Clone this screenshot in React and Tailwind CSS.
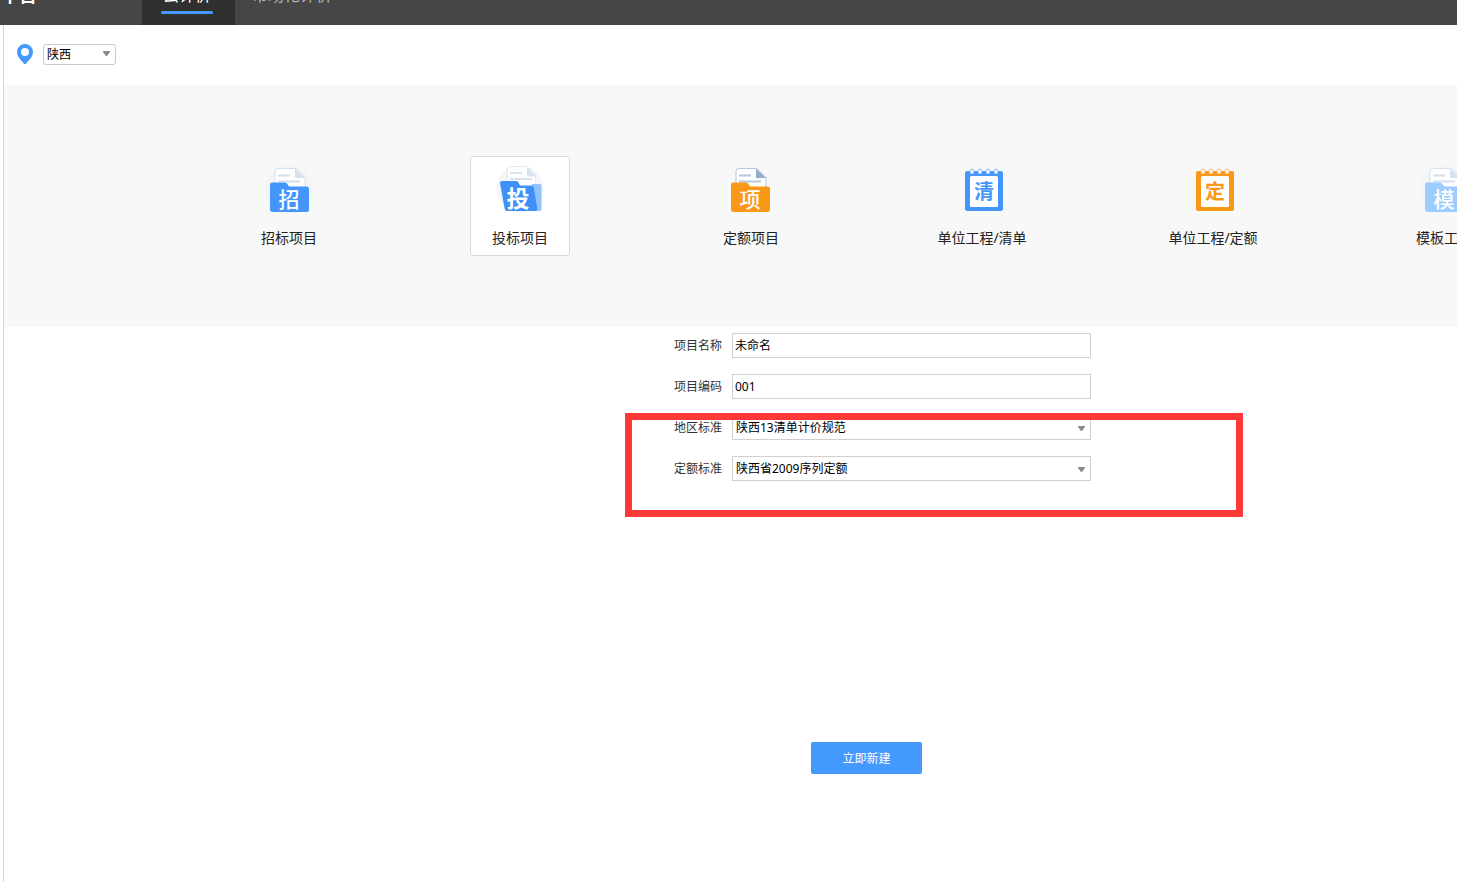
import { useState } from 'react'

const FONT = "font-['Noto_Sans','Noto_Sans_CJK_SC',sans-serif]"

function FolderIcon({ char, folder, line, fold, halo }) {
  return (
    <svg
      width="52"
      height="52"
      viewBox={halo ? '-1 -1 52 52' : '0 -1 52 52'}
      aria-hidden="true"
    >
      {halo && <circle cx="25" cy="25" r="24" fill="#f3f4f6" />}
      <path
        d="M13.5 3.5h18.500l9 9V30h-30V6a2.500 2.500 0 0 1 2.500-2.500z"
        fill="#fff"
        stroke={line}
      />
      <path d="M31 3.500l10 9.500H31z" fill={fold} />
      <path d="M14 10.500h12M14 16.500h22" stroke={line} strokeWidth="2" />
      <path
        d="M8.500 17.500h12.500q1.500 0 2.500 1.500l1.500 2.500h17.500a2.500 2.500 0 0 1 2.500 2.500v20.500a2.500 2.500 0 0 1-2.500 2.500h-34a2.500 2.500 0 0 1-2.500-2.500v-24.500a2.500 2.500 0 0 1 2.500-2.500z"
        fill={folder}
      />
      <text x="25" y="42" textAnchor="middle" fontSize="21" fontWeight="500" fill="#fff">
        {char}
      </text>
    </svg>
  )
}

function OpenFolderIcon({ char }) {
  return (
    <svg width="52" height="52" viewBox="0 0 52 52" aria-hidden="true">
      <circle cx="26" cy="25" r="23.500" fill="#f4f5f7" />
      <path d="M14.500 2.500h19l8 9V40h-28V3.500z" fill="#fff" stroke="#e1ebf7" />
      <path d="M33 2.500l9 10h-9z" fill="#d6e3f3" />
      <path d="M16 9h12M16 15h22" stroke="#d6e3f3" strokeWidth="2" />
      <path d="M38 20h7.500a2 2 0 0 1 2 2v23a2 2 0 0 1-2 2H34z" fill="#8fc4ff" />
      <path
        d="M8 17h14q1.500 0 2.500 1.500l1.500 3h11.500q2 0 2.300 2l3.500 21.500q0.200 2-1.800 2H13q-2 0-2.300-2L6 19q-0.200-2 2-2z"
        fill="#4091f7"
      />
      <text x="24" y="43" textAnchor="middle" fontSize="23" fontWeight="700" fill="#fff">
        {char}
      </text>
    </svg>
  )
}

function NotepadIcon({ char, color, ring }) {
  return (
    <svg width="52" height="52" viewBox="-2 -1 52 52" aria-hidden="true">
      <rect x="7" y="6" width="38" height="40" rx="2" fill={color} />
      <rect x="12" y="11" width="28" height="31" rx="1.500" fill="#fff" />
      {[14, 22, 30, 38].map((x) => (
        <ellipse key={x} cx={x} cy="6.500" rx="2" ry="2.500" fill="#f8f8f8" stroke={ring} />
      ))}
      <text x="26" y="34" textAnchor="middle" fontSize="20" fontWeight="700" fill={color}>
        {char}
      </text>
    </svg>
  )
}

const projectTypes = [
  {
    id: 'tender',
    label: '招标项目',
    icon: <FolderIcon char="招" folder="#4496fb" line="#d3e0ef" fold="#d3e0ef" halo />,
  },
  { id: 'bid', label: '投标项目', icon: <OpenFolderIcon char="投" /> },
  {
    id: 'quota',
    label: '定额项目',
    icon: <FolderIcon char="项" folder="#fb9817" line="#b5c8dc" fold="#93adc9" />,
  },
  {
    id: 'unitList',
    label: '单位工程/清单',
    icon: <NotepadIcon char="清" color="#4496fb" ring="#8bbffb" />,
  },
  {
    id: 'unitQuota',
    label: '单位工程/定额',
    icon: <NotepadIcon char="定" color="#fb9817" ring="#fcc077" />,
  },
  {
    id: 'template',
    label: '模板工程',
    icon: <FolderIcon char="模" folder="#9dccff" line="#d3e0ef" fold="#d3e0ef" halo />,
  },
]

function Arrow({ className }) {
  return (
    <svg
      className={`pointer-events-none absolute right-[6px] ${className}`}
      width="7"
      height="5"
      viewBox="0 0 7 5"
      aria-hidden="true"
    >
      <path d="M0 0h7v1L4 5H3L0 1z" fill="#8c8c8c" />
    </svg>
  )
}

function Row({ id, label, children }) {
  return (
    <div className="flex items-center">
      <label htmlFor={id} className="w-[58px] text-xs text-[#333]">
        {label}
      </label>
      {children}
    </div>
  )
}

function SelectField({ id, options }) {
  return (
    <div className="relative w-[359px]">
      <select
        id={id}
        className="block h-[25px] w-full appearance-none border border-[#cfcfcf] bg-white px-[3px] text-xs text-black outline-none"
      >
        {options.map((option) => (
          <option key={option}>{option}</option>
        ))}
      </select>
      <Arrow className="top-[11px]" />
    </div>
  )
}

function App() {
  const [activeType, setActiveType] = useState('bid')
  const [name, setName] = useState('未命名')
  const [code, setCode] = useState('001')

  const inputClass =
    'h-[25px] w-[359px] border border-[#cfcfcf] bg-white px-[2px] pb-px text-xs text-black outline-none'

  return (
    <div className={`flex min-h-screen flex-col overflow-hidden bg-white ${FONT}`}>
      <header className="flex h-[25px] items-end overflow-hidden bg-[#464646]">
        <h1 className="w-[142px] shrink-0 pb-[20px] pl-px text-lg leading-[20px] font-bold text-white">
          平台
        </h1>
        <nav className="flex items-end">
          <button className="flex w-[93px] flex-col items-start bg-[#303030] pb-[11px] pl-[19px] text-base leading-[20px] text-white">
            <span className="w-[52px] text-center">云计价</span>
            <span className="mt-[6px] h-[3px] w-[52px] rounded-full bg-[#4499ff]" />
          </button>
          <button className="px-[17px] pb-[20px] text-base leading-[20px] text-[#b5b5b5]">
            市场化评价
          </button>
        </nav>
      </header>

      <main className="ml-[3px] flex-1 border-l border-[#d5d5d5]">
        <div className="flex h-[60px] items-center gap-[9px] pb-[2px] pl-[13px]">
          <svg width="17" height="21" viewBox="0 0 17 21" aria-hidden="true">
            <path
              d="M8 0a8 8 0 0 0-8 8c0 5 5 9 6.800 11.500q1.200 1 2.400 0c1.800-2.500 6.800-6.500 6.800-11.500a8 8 0 0 0-8-8zm0 4a4 4 0 1 1 0 8 4 4 0 0 1 0-8z"
              fill="#4499ff"
            />
          </svg>
          <div className="relative w-[73px]">
            <select
              aria-label="地区"
              className="block h-[21px] w-full appearance-none rounded-[3px] border border-[#c9c9c9] bg-white px-[3px] pt-px text-xs text-black outline-none"
            >
              <option>陕西</option>
            </select>
            <Arrow className="top-[7px]" />
          </div>
        </div>

        <div className="flex h-[242px] gap-[131px] overflow-hidden bg-[#f8f8f8] pt-[71px] pl-[235px]">
          {projectTypes.map((type) => (
            <button
              key={type.id}
              onClick={() => setActiveType(type.id)}
              className={`flex h-[100px] w-[100px] shrink-0 flex-col items-center rounded-[3px] border pt-[7px] text-sm text-[#222] ${
                activeType === type.id ? 'border-[#d3dade] bg-white' : 'border-transparent'
              }`}
            >
              {type.icon}
              <span className="mt-[12px] whitespace-nowrap">{type.label}</span>
            </button>
          ))}
        </div>

        <form className="pt-[6px] pl-[670px]" onSubmit={(e) => e.preventDefault()}>
          <div className="relative flex flex-col gap-4">
            <Row id="name" label="项目名称">
              <input
                id="name"
                value={name}
                onChange={(e) => setName(e.target.value)}
                className={inputClass}
              />
            </Row>
            <Row id="code" label="项目编码">
              <input
                id="code"
                value={code}
                onChange={(e) => setCode(e.target.value)}
                className={inputClass}
              />
            </Row>
            <Row id="region" label="地区标准">
              <SelectField id="region" options={['陕西13清单计价规范']} />
            </Row>
            <Row id="standard" label="定额标准">
              <SelectField id="standard" options={['陕西省2009序列定额']} />
            </Row>
            <div className="pointer-events-none absolute top-[80px] left-[-49px] h-[104px] w-[618px] border-[7px] border-[#fc3838]" />
          </div>
          <button
            type="submit"
            className="mt-[261px] ml-[137px] block h-8 w-[111px] rounded-[2px] bg-[#4499ff] pt-px text-xs text-white"
          >
            立即新建
          </button>
        </form>
      </main>
    </div>
  )
}

export default App
